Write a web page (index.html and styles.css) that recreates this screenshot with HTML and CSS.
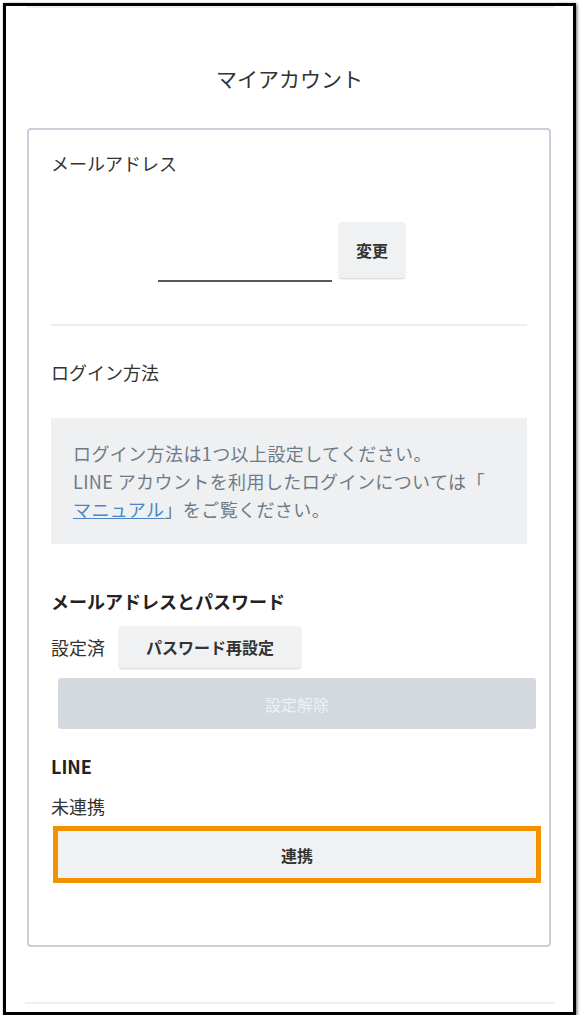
FILE: index.html
```html
<!DOCTYPE html>
<html lang="ja">
<head>
  <meta charset="UTF-8" />
  <meta name="viewport" content="width=device-width, initial-scale=1.0"/>
  <title>マイアカウント</title>
  <link rel="stylesheet" href="styles.css">
</head>
<body>
  <div class="frame">
    <div class="topbar"></div>

    <h1 class="page-title">マイアカウント</h1>

    <div class="card">
      <p class="label">メールアドレス</p>
      <div class="email-row">
        <input type="text" class="email-input" aria-label="メールアドレス">
        <button class="btn btn-change">変更</button>
      </div>

      <div class="divider"></div>

      <p class="label label-login">ログイン方法</p>
      <div class="notice">
        ログイン方法は1つ以上設定してください。<br>
        LINE アカウントを利用したログインについては「<br><a href="#">マニュアル</a>」をご覧ください。
      </div>

      <h2 class="method-title">メールアドレスとパスワード</h2>
      <div class="status-row">
        <span class="status">設定済</span>
        <button class="btn btn-reset">パスワード再設定</button>
      </div>
      <button class="btn btn-wide btn-disabled" disabled>設定解除</button>

      <h2 class="method-title method-line">LINE</h2>
      <p class="status status-line">未連携</p>
      <button class="btn btn-wide btn-link highlight">連携</button>
    </div>

    <div class="bottombar"></div>
  </div>
</body>
</html>
```

FILE: styles.css
```css
* {
  box-sizing: border-box;
}

body {
  margin: 0;
  background: #fff;
  font-family: "Noto Sans CJK JP", "Noto Sans", sans-serif;
  color: #333;
}

.frame {
  margin: 3px 0 0 3px;
  width: 573px;
  height: 1012px;
  border: 3px solid #000;
  box-shadow: 1px 1px 3px rgba(0, 0, 0, 0.6);
  overflow: hidden;
}

.topbar {
  height: 2px;
  margin: 0 18px 0 21px;
  background: #eeeff0;
}

.page-title {
  margin: 55px 0 0;
  font-size: 21px;
  font-weight: normal;
  line-height: 30px;
  text-align: center;
  color: #333;
}

.card {
  margin: 35px 22px 0 21px;
  padding: 20px 22px 67px;
  border: 2px solid #c8d0d9;
  border-radius: 4px;
}

.label {
  margin: 0;
  font-size: 18px;
  line-height: 26px;
  color: #333;
}

.email-row {
  display: flex;
  justify-content: center;
  align-items: flex-start;
  gap: 7px;
  margin-top: 46px;
  padding-right: 15px;
}

.email-input {
  width: 174px;
  height: 60px;
  border: none;
  border-bottom: 2px solid #595959;
  background: transparent;
  outline: none;
}

.btn {
  font-family: inherit;
  font-size: 16px;
  font-weight: bold;
  color: #333;
  background: #eff1f3;
  border: none;
  border-radius: 3px;
  cursor: pointer;
}

.btn-change {
  width: 66px;
  height: 56px;
  box-shadow: 0 1px 2px rgba(0, 0, 0, 0.18);
}

.divider {
  height: 2px;
  margin-top: 42px;
  background: #eceef0;
}

.label-login {
  margin-top: 33px;
}

.notice {
  margin-top: 33px;
  padding: 21px 22px;
  background: #eef0f2;
  font-size: 18px;
  line-height: 28px;
  letter-spacing: 0.4px;
  color: #6e7b87;
}

.notice a {
  color: #4a86c5;
  text-decoration: underline;
}

.method-title {
  margin: 44px 0 0;
  font-size: 18px;
  font-weight: bold;
  line-height: 26px;
  color: #222;
}

.status-row {
  display: flex;
  align-items: center;
  gap: 14px;
  margin-top: 12px;
}

.status {
  margin: 0;
  font-size: 18px;
  line-height: 26px;
  color: #333;
}

.btn-reset {
  height: 42px;
  padding: 0 27px;
  box-shadow: 0 1px 2px rgba(0, 0, 0, 0.18);
}

.btn-wide {
  display: block;
  width: calc(100% + 2px);
  margin-left: 7px;
}

.btn-disabled {
  height: 51px;
  margin-top: 10px;
  background: #d3d9df;
  color: #eef1f4;
  font-weight: normal;
  cursor: default;
}

.method-line {
  margin-top: 24px;
}

.status-line {
  margin-top: 14px;
}

.btn-link {
  height: 47px;
  margin-top: 12px;
}

.highlight {
  border-radius: 0;
  outline: 5px solid #f39200;
}

.bottombar {
  height: 2px;
  margin: 55px 18px 0 19px;
  background: #eeeff0;
}
```
